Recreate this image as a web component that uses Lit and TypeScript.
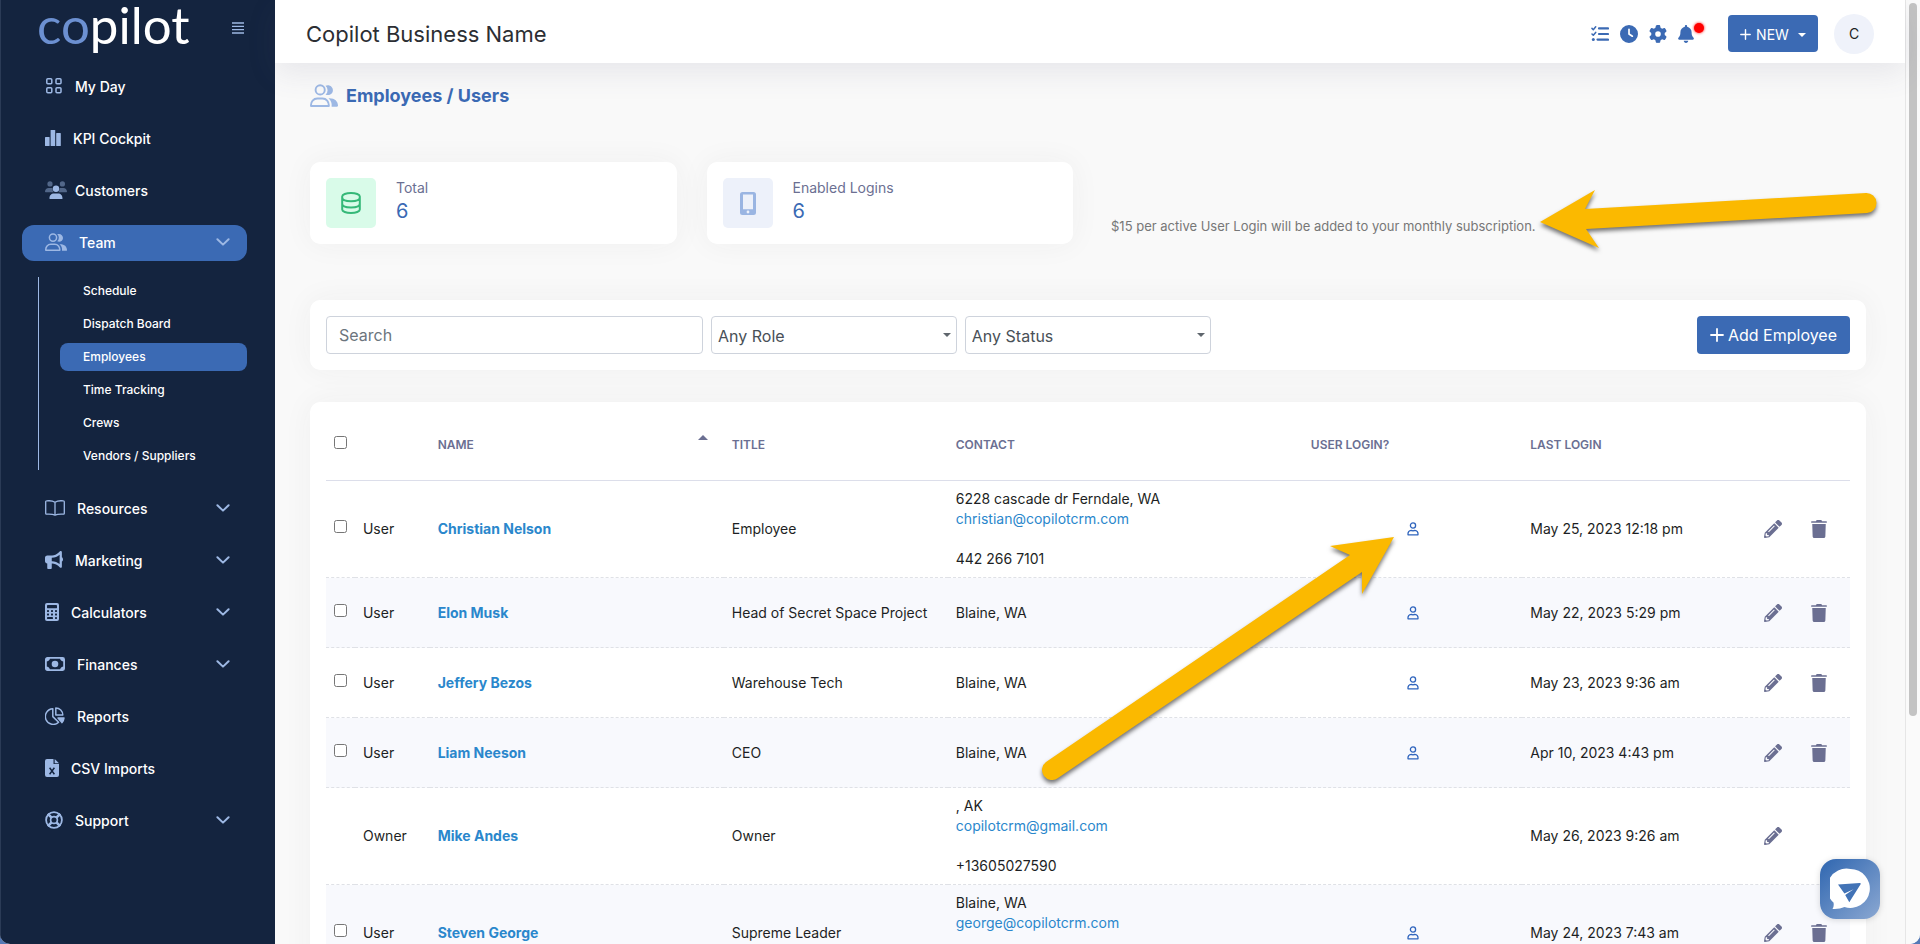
import { LitElement, html, svg, css, nothing, type TemplateResult } from "lit";
import { customElement, state } from "lit/decorators.js";
import { classMap } from "lit/directives/class-map.js";

const base = css`
  * { box-sizing: border-box; }
  :host { display: block; font-family: Inter, "Open Sans", sans-serif; }
  svg { display: block; flex: none; }
  a { text-decoration: none; color: inherit; }
  button { font-family: inherit; border: 0; margin: 0; cursor: pointer; }
  ul { list-style: none; margin: 0; padding: 0; }
`;

const userGroup = (w: number, h: number) => html`
  <svg width=${w} height=${h} viewBox="0 0 22 18" fill="none" aria-hidden="true">
    <circle cx="8" cy="4.6" r="3.6" stroke="currentColor" stroke-width="1.5" />
    <path d="M.8 17.2c-.3-3.4 2-5.9 5-5.9h4c3 0 5.2 2.5 5 5.9z" stroke="currentColor" stroke-width="1.5" stroke-linejoin="round" />
    <path d="M12.2 1.3a4.6 4.6 0 0 1 0 7c2.800 1.200 5.800-.4 5.800-3.400s-3-4.900-5.800-3.600zM14.500 11.200c2 1.600 2.800 3.800 2.500 6.600h4.200c.6 0 .8-.4.8-.9-.2-3.500-2.600-6-7.500-5.700z" fill="currentColor" />
  </svg>`;

const icons: Record<string, TemplateResult> = {
  grid: html`<svg width="18" height="18" viewBox="0 0 18 18" fill="none" stroke="currentColor" stroke-width="1.500" aria-hidden="true">
    <rect x="1.800" y="1.800" width="5" height="5" rx="1" /><rect x="11" y="1.800" width="5" height="5" rx="1" />
    <rect x="1.800" y="10.800" width="5" height="5" rx="1" /><rect x="11" y="10.800" width="5" height="5" rx="1" /></svg>`,
  bars: html`<svg width="16" height="16" viewBox="0 0 16 16" fill="currentColor" aria-hidden="true">
    <rect x="0" y="7" width="4.600" height="9" rx=".6" /><rect x="5.600" y="0" width="4.600" height="16" rx=".6" /><rect x="11.200" y="3" width="4.600" height="13" rx=".6" /></svg>`,
  users: html`<svg width="22" height="18" viewBox="0 0 22 18" fill="currentColor" aria-hidden="true">
    <g opacity=".45"><circle cx="5" cy="2.900" r="2.600" /><circle cx="17.400" cy="2.900" r="2.600" />
    <path d="M0 10.800C0 8.500 1.600 7 3.700 7h2.200c.7 0 1.200.1 1.700.4-.2 1.500.2 2.600 1 3.800H.5zM22 10.800C22 8.500 20.400 7 18.300 7h-2.200c-.7 0-1.200.1-1.700.4.2 1.500-.2 2.600-1 3.800h8.100z" /></g>
    <circle cx="11" cy="7.800" r="3.200" /><path d="M4.500 17.400c-.2-3 1.800-5 4.500-5h4c2.700 0 4.600 2 4.500 5 0 .4-.2.600-.6.600H5.100c-.4 0-.6-.2-.6-.6z" /></svg>`,
  team: userGroup(22, 18),
  book: html`<svg width="20" height="16" viewBox="0 0 20 16" fill="none" stroke="currentColor" stroke-width="1.300" stroke-linejoin="round" aria-hidden="true">
    <path d="M10 2.200C8 .9 4.600.6 1.600.9c-.6 0-.9.400-.9.900v11.500c0 .6.400 1 .9.900 3-.2 6.400 0 8.400 1 2-1 5.400-1.200 8.400-1 .5.100.9-.3.900-.9V1.800c0-.5-.3-.9-.9-.9-3-.3-6.400 0-8.400 1.300zV15" /></svg>`,
  horn: html`<svg width="18" height="18" viewBox="0 0 512 512" fill="currentColor" aria-hidden="true"><path d="M480 32c0-12.900-7.800-24.600-19.800-29.600s-25.700-2.200-34.900 6.900L381.700 53c-48 48-113.100 75-181 75H64c-35.300 0-64 28.700-64 64v96c0 35.300 28.700 64 64 64v128c0 17.700 14.300 32 32 32h64c17.700 0 32-14.300 32-32V352h8.700c67.900 0 133 27 181 75l43.600 43.600c9.200 9.200 22.900 11.900 34.900 6.900s19.800-16.600 19.800-29.600V300.400c18.600-8.800 32-32.500 32-60.400s-13.400-51.600-32-60.400V32zm-64 76.700v262.600C357.200 317.800 280.500 288 200.700 288H192v-96h8.700c79.800 0 156.500-29.800 215.300-83.300z" /></svg>`,
  calc: html`<svg width="14" height="18" viewBox="0 0 14 18" aria-hidden="true"><rect width="14" height="18" rx="2" fill="currentColor" />
    <g fill="#14243f"><rect x="2" y="2" width="10" height="3.200" rx=".4" /><rect x="2" y="7" width="2" height="2" rx=".4" /><rect x="6" y="7" width="2" height="2" rx=".4" /><rect x="10" y="7" width="2" height="2" rx=".4" /><rect x="2" y="10.500" width="2" height="2" rx=".4" /><rect x="6" y="10.500" width="2" height="2" rx=".4" /><rect x="10" y="10.500" width="2" height="2" rx=".4" /><rect x="2" y="14" width="6" height="2" rx=".4" /><rect x="10" y="14" width="2" height="2" rx=".4" /></g></svg>`,
  money: html`<svg width="20" height="14" viewBox="0 0 20 14" aria-hidden="true"><rect x=".9" y=".9" width="18.200" height="12.200" rx="1.500" fill="none" stroke="currentColor" stroke-width="1.800" /><circle cx="10" cy="7" r="3.300" fill="currentColor" />
    <path d="M1 1h4c0 2-1.600 3.600-4 3.600zM19 1h-4c0 2 1.600 3.600 4 3.600zM1 13h4c0-2-1.600-3.600-4-3.600zM19 13h-4c0-2 1.600-3.600 4-3.600z" fill="currentColor" /></svg>`,
  pie: html`<svg width="20" height="18" viewBox="0 0 20 18" fill="none" stroke="currentColor" stroke-width="1.500" stroke-linejoin="round" aria-hidden="true">
    <path d="M7.800 1.800A7.800 7.800 0 1 0 13.600 15.200L7.800 9.600zM10.800.9a7 7 0 0 1 7 7h-7z" /><path d="M13 11h6c-.2 2-.9 3.400-2 4.600z" fill="currentColor" /></svg>`,
  sheet: html`<svg width="14" height="18" viewBox="0 0 14 18" aria-hidden="true"><path d="M2 0h6.500v5H14v11a2 2 0 0 1-2 2H2a2 2 0 0 1-2-2V2a2 2 0 0 1 2-2z" fill="currentColor" /><path d="M9.700 0 14 4.200H9.700z" fill="currentColor" /><path d="m4.600 8.800 4.800 6.400m0-6.400-4.800 6.400" stroke="#14243f" stroke-width="1.500" /></svg>`,
  ring: html`<svg width="18" height="18" viewBox="0 0 18 18" fill="none" stroke="currentColor" aria-hidden="true"><circle cx="9" cy="9" r="7.900" stroke-width="1.800" /><circle cx="9" cy="9" r="3.400" stroke-width="1.700" /><path d="m2.800 2.800 3.800 3.800m4.800 4.800 3.800 3.800m0-12.400-3.800 3.800m-4.800 4.800-3.800 3.800" stroke-width="2.600" /></svg>`,
  chevron: html`<svg width="14" height="8" viewBox="0 0 14 8" fill="none" stroke="currentColor" stroke-width="2" stroke-linecap="round" stroke-linejoin="round" aria-hidden="true"><path d="m1.400 1.200 5.600 5.400 5.600-5.400" /></svg>`,
  tasks: html`<svg width="18" height="18" viewBox="0 0 18 18" fill="none" stroke="currentColor" stroke-linecap="round" stroke-linejoin="round" aria-hidden="true"><path d="M8 3.400h9M8 9h9M6.500 14.600H17" stroke-width="2.200" /><path d="m1 3.400 1.300 1.300L4.700 1.800M1 9l1.300 1.300 2.400-2.900" stroke-width="1.500" /><circle cx="2.300" cy="14.600" r="1.500" fill="currentColor" stroke="none" /></svg>`,
  clock: html`<svg width="18" height="18" viewBox="0 0 512 512" fill="currentColor" aria-hidden="true"><path d="M256 0a256 256 0 1 1 0 512A256 256 0 1 1 256 0zM232 120V256c0 8 4 15.500 10.700 20l96 64c11 7.400 25.900 4.400 33.300-6.700s4.400-25.900-6.700-33.300L280 243.200V120c0-13.300-10.700-24-24-24s-24 10.700-24 24z" /></svg>`,
  gear: html`<svg width="18" height="18" viewBox="0 0 512 512" fill="currentColor" aria-hidden="true"><path d="M495.900 166.600c3.200 8.700.5 18.400-6.400 24.600l-43.300 39.400c1.100 8.300 1.700 16.800 1.700 25.400s-.6 17.100-1.700 25.400l43.300 39.400c6.900 6.200 9.600 15.900 6.400 24.600c-4.400 11.900-9.700 23.300-15.800 34.300l-4.700 8.100c-6.600 11-14 21.400-22.100 31.200c-5.900 7.200-15.700 9.600-24.500 6.800l-55.700-17.700c-13.400 10.300-28.200 18.900-44 25.400l-12.500 57.100c-2 9.100-9 16.300-18.200 17.800c-13.800 2.300-28 3.500-42.500 3.500s-28.700-1.200-42.500-3.500c-9.200-1.500-16.200-8.700-18.200-17.800l-12.500-57.100c-15.800-6.500-30.600-15.100-44-25.400L83.100 425.900c-8.800 2.800-18.600.3-24.500-6.800c-8.100-9.800-15.500-20.200-22.100-31.200l-4.700-8.100c-6.100-11-11.400-22.400-15.800-34.300c-3.200-8.700-.5-18.400 6.400-24.600l43.300-39.400C64.600 273.100 64 264.600 64 256s.6-17.100 1.700-25.400L22.400 191.200c-6.900-6.200-9.600-15.900-6.400-24.600c4.400-11.900 9.700-23.300 15.800-34.300l4.700-8.100c6.600-11 14-21.400 22.100-31.200c5.900-7.200 15.700-9.600 24.500-6.800l55.700 17.700c13.400-10.300 28.200-18.900 44-25.400l12.500-57.100c2-9.100 9-16.300 18.200-17.800C227.300 1.200 241.500 0 256 0s28.700 1.200 42.500 3.500c9.200 1.500 16.200 8.700 18.200 17.800l12.500 57.100c15.800 6.500 30.600 15.100 44 25.400l55.700-17.700c8.800-2.800 18.600-.3 24.500 6.800c8.100 9.800 15.500 20.200 22.100 31.200l4.700 8.100c6.100 11 11.400 22.400 15.800 34.300zM256 336a80 80 0 1 0 0-160 80 80 0 1 0 0 160z" /></svg>`,
  bell: html`<svg width="16" height="18" viewBox="0 0 448 512" fill="currentColor" aria-hidden="true"><path d="M224 0c-17.700 0-32 14.300-32 32V51.200C119 66 64 130.600 64 208v18.800c0 47-17.300 92.400-48.500 127.600l-7.400 8.300c-8.400 9.400-10.400 22.900-5.300 34.400S19.400 416 32 416H416c12.600 0 24-7.400 29.200-18.900s3.100-25-5.300-34.400l-7.400-8.300C401.300 319.200 384 273.900 384 226.800V208c0-77.400-55-142-128-156.800V32c0-17.700-14.300-32-32-32zm45.300 493.300c12-12 18.700-28.300 18.700-45.300H160c0 17 6.700 33.300 18.700 45.300s28.300 18.700 45.300 18.700s33.300-6.700 45.300-18.700z" /></svg>`,
  database: html`<svg width="20" height="22" viewBox="0 0 20 22" fill="none" stroke="currentColor" stroke-width="2" aria-hidden="true"><path d="M1.200 4.500C1.200 2.600 5 1 10 1s8.800 1.600 8.800 3.500v13c0 1.900-3.800 3.500-8.800 3.500s-8.800-1.600-8.800-3.500zM1.200 5.500C1.200 8 5 9.200 10 9.200S18.800 8 18.800 5.500M1.200 11.800c0 2.500 3.800 3.700 8.800 3.700s8.800-1.200 8.800-3.700" /></svg>`,
  phone: html`<svg width="16" height="23" viewBox="0 0 16 23" aria-hidden="true"><path fill="currentColor" fill-rule="evenodd" d="M2.500 0h11A2.500 2.500 0 0 1 16 2.500v18a2.500 2.500 0 0 1-2.500 2.500h-11A2.500 2.500 0 0 1 0 20.500v-18A2.500 2.500 0 0 1 2.500 0zM3 2.600v14.600h10V2.600zM8 18.600a1.400 1.400 0 1 0 0 2.800 1.400 1.400 0 0 0 0-2.800z" /></svg>`,
  person: html`<svg width="12" height="14" viewBox="0 0 12 14" fill="none" stroke="currentColor" stroke-width="1.300" stroke-linejoin="round" aria-hidden="true"><circle cx="6" cy="3.500" r="2.600" /><path d="M1 12.800c-.3-2.600 1-4.300 3.200-4.500L6 8.800l1.800-.5c2.200.2 3.500 1.900 3.200 4.500z" /></svg>`,
  pencil: html`<svg width="18" height="18" viewBox="0 0 512 512" fill="currentColor" aria-hidden="true"><path d="M497.900 142.100l-46.100 46.100c-4.700 4.700-12.300 4.700-17 0l-111-111c-4.700-4.700-4.700-12.300 0-17l46.100-46.100c18.700-18.700 49.100-18.700 67.900 0l60.100 60.100c18.800 18.700 18.800 49.100 0 67.900zM284.200 99.800L21.600 362.400.4 483.900c-2.900 16.400 11.400 30.600 27.800 27.800l121.500-21.300 262.600-262.600c4.700-4.700 4.700-12.300 0-17l-111-111c-4.800-4.700-12.400-4.700-17.100 0zM124.100 339.900c-5.500-5.500-5.500-14.300 0-19.800l154-154c5.500-5.500 14.300-5.500 19.800 0s5.500 14.300 0 19.800l-154 154c-5.500 5.500-14.300 5.500-19.800 0zM88 424h48v36.300l-64.500 11.300-31.100-31.100L51.700 376H88v48z" /></svg>`,
  trash: html`<svg width="16" height="18" viewBox="0 0 448 512" fill="currentColor" aria-hidden="true"><path d="M432 32H312l-9.400-18.700A24 24 0 0 0 281.100 0H166.800a23.720 23.720 0 0 0-21.400 13.300L136 32H16A16 16 0 0 0 0 48v16a16 16 0 0 0 16 16h416a16 16 0 0 0 16-16V48a16 16 0 0 0-16-16zM43.200 467a48 48 0 0 0 47.900 45h265.800a48 48 0 0 0 47.900-45L416 116H32z" /></svg>`,
  plus: html`<svg width="14" height="14" viewBox="0 0 14 14" stroke="currentColor" stroke-width="1.800" stroke-linecap="round" aria-hidden="true"><path d="M7 1v12M1 7h12" /></svg>`,
  chat: html`<svg width="40" height="42" viewBox="0 0 40 42" aria-hidden="true"><path fill="#fff" d="M20.500 1a19.500 19.500 0 1 1-6 38.100c-3.500 1.600-7.500 2.200-12 1.900 1.200-2 1.500-3.700 1-6.400A19.500 19.500 0 0 1 20.500 1z" /><path fill="#4273b6" d="M8 16.400 29.800 15c.8 0 1.100.6.8 1.300L19.300 34.200 15.200 27l8.400-5.800-9.200 4.300z" /></svg>`,
};

interface NavEntry { icon: string; label: string; expandable?: boolean; children?: string[]; tight?: boolean; }

const NAV: NavEntry[] = [
  { icon: "grid", label: "My Day" },
  { icon: "bars", label: "KPI Cockpit" },
  { icon: "users", label: "Customers", tight: true },
  { icon: "team", label: "Team", expandable: true, children: ["Schedule", "Dispatch Board", "Employees", "Time Tracking", "Crews", "Vendors / Suppliers"] },
  { icon: "book", label: "Resources", expandable: true },
  { icon: "horn", label: "Marketing", expandable: true },
  { icon: "calc", label: "Calculators", expandable: true },
  { icon: "money", label: "Finances", expandable: true },
  { icon: "pie", label: "Reports" },
  { icon: "sheet", label: "CSV Imports" },
  { icon: "ring", label: "Support", expandable: true },
];

@customElement("side-nav")
class SideNav extends LitElement {
  static styles = [base, css`
    :host { flex: none; width: 275px; background: #14243f; color: #fff; border-left: 1px solid #2b3b56; }
    .brand { display: flex; align-items: center; justify-content: space-between; height: 57px; padding: 0 31px 0 36px; }
    .logo { font: 400 51px/50px Lato, sans-serif; color: #fff; padding-bottom: 7px; }
    .logo-tint { color: #6c90d1; }
    .toggle { background: none; padding: 0 0 2px; color: #9db8e4; }
    .nav { display: flex; flex-direction: column; gap: 16px; padding: 12px 28px 24px 21px; }
    .link { display: flex; align-items: center; gap: 12px; height: 36px; padding: 0 17px 2px 23px; border-radius: 12px; font-size: 14px; font-weight: 500; }
    .link.tight { gap: 8px; }
    .link svg { color: #9db8e4; }
    .label { flex: 1; }
    .active { background: #3b6ab4; }
    .sub { display: flex; flex-direction: column; gap: 5px; margin: 16px 0 5px 16px; padding-left: 21px; border-left: 1px solid #9db8e4; }
    .sublink { display: block; height: 28px; line-height: 28px; padding-left: 23px; border-radius: 8px; font-size: 12px; font-weight: 500; }
  `];

  render() {
    return html`
      <div class="brand">
        <a class="logo" href="#"><span class="logo-tint">co</span>pilot</a>
        <button class="toggle" aria-label="Toggle menu">
          <svg width="12" height="12" viewBox="0 0 12 12" stroke="currentColor" stroke-width="1.300"><path d="M0 1h12M0 4.300h12M0 7.600h12M0 11h12" /></svg>
        </button>
      </div>
      <nav>
        <ul class="nav">
          ${NAV.map((n) => html`
            <li>
              <a href="#" class=${classMap({ link: true, active: !!n.children, tight: !!n.tight })}>
                ${icons[n.icon]}<span class="label">${n.label}</span>${n.expandable ? icons.chevron : nothing}
              </a>
              ${n.children ? html`<ul class="sub">
                ${n.children.map((c) => html`<li><a href="#" class=${classMap({ sublink: true, active: c === "Employees" })}>${c}</a></li>`)}
              </ul>` : nothing}
            </li>`)}
        </ul>
      </nav>`;
  }
}

@customElement("top-bar")
class TopBar extends LitElement {
  static styles = [base, css`
    :host { flex: none; position: relative; z-index: 1; background: #fff; box-shadow: 0 10px 30px rgba(82, 84, 115, 0.11); }
    .bar { display: flex; align-items: center; height: 63px; padding: 4px 31px 0; }
    .title { flex: 1; margin: 0; font-size: 22px; line-height: 28px; font-weight: 400; color: #2c2e33; }
    .tools { display: flex; align-items: center; gap: 11px; color: #3b6ab4; }
    .tool { position: relative; background: none; padding: 0; color: inherit; }
    .dot { position: absolute; top: -2px; right: -10px; width: 10px; height: 10px; border-radius: 50%; background: #f00; box-shadow: 0 0 3px #f00; }
    .new { display: flex; align-items: center; justify-content: center; gap: 5px; width: 90px; height: 37px; margin-left: 34px; padding: 2px 6px 0; border-radius: 4px; background: #3b6ab4; color: #fff; font-size: 14px; font-weight: 400; }
    .new svg { width: 11px; height: 11px; }
    .caret { margin-left: 4px; border: 4px solid transparent; border-top-color: #fff; border-bottom: 0; }
    .avatar { width: 40px; height: 40px; margin-left: 16px; border-radius: 50%; background: #eff2fa; color: #1d1f24; font-size: 14px; }
  `];

  render() {
    return html`<header class="bar">
      <h1 class="title">Copilot Business Name</h1>
      <div class="tools">
        <button class="tool" aria-label="Tasks">${icons.tasks}</button>
        <button class="tool" aria-label="Time clock">${icons.clock}</button>
        <button class="tool" aria-label="Settings">${icons.gear}</button>
        <button class="tool" aria-label="Notifications">${icons.bell}<span class="dot"></span></button>
      </div>
      <button class="new">${icons.plus}NEW<span class="caret"></span></button>
      <button class="avatar">C</button>
    </header>`;
  }
}

interface Employee { role: string; name: string; title: string; address: string; email?: string; phone?: string; login: boolean; last: string; }

const EMPLOYEES: Employee[] = [
  { role: "User", name: "Christian Nelson", title: "Employee", address: "6228 cascade dr Ferndale, WA", email: "christian@copilotcrm.com", phone: "442 266 7101", login: true, last: "May 25, 2023 12:18 pm" },
  { role: "User", name: "Elon Musk", title: "Head of Secret Space Project", address: "Blaine, WA", login: true, last: "May 22, 2023 5:29 pm" },
  { role: "User", name: "Jeffery Bezos", title: "Warehouse Tech", address: "Blaine, WA", login: true, last: "May 23, 2023 9:36 am" },
  { role: "User", name: "Liam Neeson", title: "CEO", address: "Blaine, WA", login: true, last: "Apr 10, 2023 4:43 pm" },
  { role: "Owner", name: "Mike Andes", title: "Owner", address: ", AK", email: "copilotcrm@gmail.com", phone: "+13605027590", login: false, last: "May 26, 2023 9:26 am" },
  { role: "User", name: "Steven George", title: "Supreme Leader", address: "Blaine, WA", email: "george@copilotcrm.com", phone: "", login: true, last: "May 24, 2023 7:43 am" },
];

@customElement("employee-table")
class EmployeeTable extends LitElement {
  @state() private selected = new Set<string>();

  static styles = [base, css`
    .grid { width: 100%; table-layout: fixed; border-collapse: separate; border-spacing: 0; font-size: 14px; line-height: 20px; color: #1d1f24; }
    .c-check { width: 1.9%; } .c-role { width: 4.9%; } .c-name { width: 19.3%; } .c-title { width: 14.7%; }
    .c-contact { width: 23.3%; } .c-login { width: 14.4%; } .c-last { width: 14.3%; }
    th { height: 63px; padding: 0 8px 8px; text-align: left; font-size: 12px; font-weight: 600; color: #6b6f92; border-bottom: 1px solid #dcdeea; }
    td { height: 70px; padding: 8px; border-bottom: 1px dashed #dfe1e6; }
    tbody tr:nth-child(even) { background: #f8f9fd; }
    .tall td { height: 97px; }
    .check { padding-right: 0; }
    .check input { display: block; width: 13px; height: 13px; margin: 0 0 5px; }
    .name { color: #2a87cc; font-weight: 700; }
    .mail { color: #2a87cc; }
    .login svg { margin: 0 auto; color: #2f64bd; }
    .head { display: flex; justify-content: space-between; }
    .sort { width: 0; height: 0; margin-right: 8px; border: 5px solid transparent; border-bottom-color: #6b6f92; border-top: 0; }
    .actions { display: flex; gap: 29px; padding-left: 16px; }
    .act { background: none; padding: 0; color: #6b6f92; }
  `];

  private toggle(name: string) {
    const next = new Set(this.selected);
    next.has(name) ? next.delete(name) : next.add(name);
    this.selected = next;
  }

  private toggleAll(e: Event) {
    this.selected = new Set((e.target as HTMLInputElement).checked ? EMPLOYEES.map((p) => p.name) : []);
  }

  render() {
    return html`<table class="grid">
      <colgroup><col class="c-check" /><col class="c-role" /><col class="c-name" /><col class="c-title" /><col class="c-contact" /><col class="c-login" /><col class="c-last" /><col /></colgroup>
      <thead><tr>
        <th class="check"><input type="checkbox" aria-label="Select all" @change=${this.toggleAll} /></th><th></th>
        <th><div class="head">NAME<span class="sort"></span></div></th><th>TITLE</th><th>CONTACT</th><th>USER LOGIN?</th><th>LAST LOGIN</th><th></th>
      </tr></thead>
      <tbody>
        ${EMPLOYEES.map((p) => html`<tr class=${classMap({ tall: !!p.email })}>
          <td class="check">${p.role === "Owner" ? nothing : html`<input type="checkbox" aria-label=${`Select ${p.name}`} .checked=${this.selected.has(p.name)} @change=${() => this.toggle(p.name)} />`}</td>
          <td>${p.role}</td>
          <td><a class="name" href="#">${p.name}</a></td>
          <td>${p.title}</td>
          <td>${p.address}${p.email ? html`<br /><a class="mail" href="#">${p.email}</a><br /><br />${p.phone || html`<br />`}` : nothing}</td>
          <td class="login">${p.login ? icons.person : nothing}</td>
          <td>${p.last}</td>
          <td><div class="actions"><button class="act" aria-label=${`Edit ${p.name}`}>${icons.pencil}</button>${p.role === "Owner" ? nothing : html`<button class="act" aria-label=${`Delete ${p.name}`}>${icons.trash}</button>`}</div></td>
        </tr>`)}
      </tbody>
    </table>`;
  }
}

@customElement("app-root")
class AppRoot extends LitElement {
  static styles = [base, css`
    :host { height: 100vh; overflow: hidden; position: relative; background: #5479b6; }
    .shell { display: flex; height: 100%; overflow: hidden; border-radius: 0 0 10px 10px; background: #f9f9f9; }
    .page { flex: 1; min-width: 0; display: flex; flex-direction: column; }
    .content { flex: 1; min-height: 0; overflow: hidden; padding: 18px 39px 0 35px; }
    .heading { display: flex; align-items: center; gap: 8px; height: 28px; margin: 0 0 53px; font-size: 18px; font-weight: 700; color: #3b6ab4; }
    .heading svg { color: #9db8e4; }
    .card { background: #fff; border-radius: 10px; box-shadow: 0 0 30px rgba(60, 60, 60, 0.05); }
    .stats { display: grid; grid-template-columns: repeat(4, 1fr); gap: 30px; margin-bottom: 56px; }
    .stat { display: flex; align-items: center; gap: 20px; padding: 16px; }
    .tile { display: flex; align-items: center; justify-content: center; width: 50px; height: 50px; border-radius: 5px; }
    .green { background: #d9fbe9; color: #35b878; }
    .blue { background: #edf1fa; color: #9ab5e2; }
    .figures { padding-bottom: 4px; }
    .stat-label { font-size: 14px; line-height: 20px; color: #6b6f92; }
    .stat-value { font-size: 20px; line-height: 26px; color: #3b6ab4; }
    .note { grid-column: span 2; align-self: end; margin: 0; padding: 0 8px 10px; font-size: 13px; line-height: 16px; color: #777; }
    .filters { display: flex; gap: 8px; padding: 16px; margin-bottom: 32px; }
    .field { height: 38px; border: 1px solid #ced3dc; border-radius: 4px; background: #fff; font: 400 16px/24px Inter, sans-serif; color: #495057; }
    .search { width: calc(25% - 4px); padding: 0 12px; }
    .search::placeholder { color: #6c757d; opacity: 1; }
    .pick { position: relative; width: calc(16% + 2px); }
    .pick .field { appearance: none; width: 100%; padding: 1px 24px 0 6px; }
    .pick .arrow { position: absolute; right: 6px; top: 17px; border: 4px solid transparent; border-top: 4px solid #5f666d; border-bottom: 0; pointer-events: none; }
    .add { display: flex; align-items: center; gap: 4px; height: 38px; margin-left: auto; padding: 0 13px; border-radius: 4px; background: #3b6ab4; color: #fff; font-size: 16px; white-space: nowrap; }
    .list { padding: 16px; }
    .track { flex: none; width: 15px; padding: 3px 3px; border-left: 1px solid #e6e6e6; background: #fafafa; }
    .thumb { width: 8px; height: 76%; border-radius: 4px; background: #c3c3c3; }
    .chat { position: absolute; right: 40px; bottom: 25px; width: 60px; height: 60px; padding: 0; border-radius: 16px; background: linear-gradient(135deg, #2f66b0, #8ba8d2); display: flex; align-items: center; justify-content: center; box-shadow: 0 1px 6px rgba(0, 0, 0, 0.15); z-index: 2; }
    .marks { position: absolute; left: 0; top: 0; z-index: 3; pointer-events: none; filter: drop-shadow(0 3px 2px rgba(0, 0, 0, 0.55)); }
  `];

  render() {
    return html`
      <div class="shell">
        <side-nav></side-nav>
        <div class="page">
          <top-bar></top-bar>
          <main class="content">
            <h2 class="heading">${userGroup(28, 23)}Employees / Users</h2>
            <section class="stats">
              <div class="card stat"><span class="tile green">${icons.database}</span><div class="figures"><div class="stat-label">Total</div><div class="stat-value">6</div></div></div>
              <div class="card stat"><span class="tile blue">${icons.phone}</span><div class="figures"><div class="stat-label">Enabled Logins</div><div class="stat-value">6</div></div></div>
              <p class="note">$15 per active User Login will be added to your monthly subscription.</p>
            </section>
            <form class="card filters" @submit=${(e: Event) => e.preventDefault()}>
              <input class="field search" type="text" placeholder="Search" aria-label="Search" />
              <div class="pick"><select class="field" aria-label="Role"><option>Any Role</option></select><span class="arrow"></span></div>
              <div class="pick"><select class="field" aria-label="Status"><option>Any Status</option></select><span class="arrow"></span></div>
              <button class="add" type="button">${icons.plus}Add Employee</button>
            </form>
            <section class="card list"><employee-table></employee-table></section>
          </main>
        </div>
        <div class="track"><div class="thumb"></div></div>
      </div>
      <button class="chat" aria-label="Chat">${icons.chat}</button>
      <svg class="marks" width="1900" height="800" viewBox="0 0 1900 800" fill="#fbb900" aria-hidden="true">
        ${svg`<path d="M1540 222 1595 190 1585 209 1866 193A10 10 0 0 1 1867 213L1586 229 1599 248Z" />
        <path d="M1394 537 1362 594 1362 572 1058 778A10 10 0 0 1 1046 762L1350 555 1330 546Z" />`}
      </svg>`;
  }
}
